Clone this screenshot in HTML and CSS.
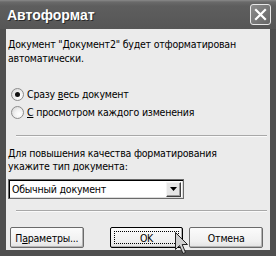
FILE: index.html
```html
<!DOCTYPE html>
<html>
<head>
<meta charset="utf-8">
<link rel="stylesheet" href="styles.css">
</head>
<body>
<div class="window">
  <div class="titlebar">
    <span class="title">Автоформат</span>
    <span class="close">
      <svg width="21" height="21" viewBox="0 0 21 21"><path d="M6 6 L15 15 M15 6 L6 15" stroke="#fff" stroke-width="2.2" stroke-linecap="square"/></svg>
    </span>
  </div>
  <div class="client">
    <p class="intro">Документ "Документ2" будет отформатирован<br>автоматически.</p>
    <div class="radios">
      <div class="radio-row"><span class="radio checked"></span><span>Сразу <u>в</u>есь документ</span></div>
      <div class="radio-row"><span class="radio"></span><span><u>С</u> просмотром каждого изменения</span></div>
    </div>
    <div class="sep"></div>
    <p class="label"><u>Д</u>ля повышения качества форматирования<br>укажите тип документа:</p>
    <div class="select">
      <span class="select-text">Обычный документ</span>
      <span class="select-btn"><svg width="7" height="4" viewBox="0 0 7 4"><path d="M0 0 H7 L3.5 4 Z" fill="#000"/></svg></span>
    </div>
    <div class="sep sep2"></div>
    <div class="buttons">
      <span class="btn">П<u>а</u>раметры...</span>
      <span class="btn default"><span class="focus">OK</span></span>
      <span class="btn">Отмена</span>
    </div>
    <svg class="cursor" width="14" height="23" viewBox="0 0 14 23"><path d="M0.5 0.5 L0.5 17.5 L4.5 13.5 L8 21.5 L10.5 20.5 L7.2 12.5 L12.5 12.5 Z" fill="#cfcfcf" stroke="#222" stroke-width="1"/></svg>
  </div>
</div>
</body>
</html>
```
FILE: styles.css
```css
html, body {
  margin: 0;
  padding: 0;
}
body {
  width: 276px;
  height: 256px;
  overflow: hidden;
  font-family: "DejaVu Sans Condensed", "DejaVu Sans", sans-serif;
  font-size: 10.5px;
  letter-spacing: -0.2px;
  white-space: nowrap;
  color: #000;
}
.window {
  width: 276px;
  height: 256px;
  background: #4f4f4f;
  display: flex;
  flex-direction: column;
}
.titlebar {
  height: 29px;
  flex: none;
  display: flex;
  align-items: center;
  justify-content: space-between;
  padding: 0 5px 0 7px;
  background: linear-gradient(#8a8a8a 0, #6a6a6a 2px, #5e5e5e 6px, #565656 100%);
}
.title {
  font-family: "Liberation Sans", Arial, sans-serif;
  font-weight: bold;
  font-size: 14px;
  letter-spacing: 0;
  color: #fff;
  text-shadow: 1px 1px 0 #2a2a2a;
  margin-top: 1px;
}
.close {
  width: 21px;
  height: 21px;
  box-sizing: border-box;
  border: 1px solid #e8e8e8;
  border-radius: 3px;
  background: linear-gradient(135deg, #8c8c8c, #666);
  display: flex;
}
.close svg {
  margin: -1px;
}
.client {
  position: relative;
  margin: 0 6px 6px 6px;
  height: 221px;
  background: #ebebeb;
  padding-left: 2px;
  display: flex;
  flex-direction: column;
}
.intro {
  margin: 8px 0 0 0;
  line-height: 14px;
}
.radios {
  margin-top: 20px;
  display: flex;
  flex-direction: column;
  padding-left: 3px;
}
.radio-row {
  height: 18px;
  line-height: 18px;
  display: flex;
  align-items: center;
  gap: 3px;
}
.radio {
  width: 13px;
  height: 13px;
  box-sizing: border-box;
  border-radius: 50%;
  border: 1px solid #8c8c8c;
  background: radial-gradient(circle at 65% 65%, #ffffff 0, #f2f2f2 40%, #d0d0d0 100%);
  display: flex;
  align-items: center;
  justify-content: center;
}
.radio.checked::after {
  content: "";
  width: 5px;
  height: 5px;
  border-radius: 50%;
  background: #111;
}
.sep {
  margin: 14px 3px 0 8px;
  height: 1px;
  background: #a8a8a8;
  box-shadow: 0 1px 0 #fafafa;
}
.label {
  margin: 11px 0 0 0;
  line-height: 13px;
}
.select {
  margin-top: 6px;
  width: 176px;
  height: 20px;
  box-sizing: border-box;
  border: 1px solid #6a6a6a;
  box-shadow: inset 1px 1px 0 #000, inset -1px -1px 0 #dcdcdc;
  background: #fff;
  display: flex;
  align-items: center;
  justify-content: space-between;
  padding: 0 2px 0 3px;
}
.select-btn {
  width: 15px;
  height: 15px;
  box-sizing: border-box;
  background: #e6e6e6;
  border: 1px solid;
  border-color: #f4f4f4 #404040 #404040 #f4f4f4;
  box-shadow: inset -1px -1px 0 #9a9a9a;
  display: flex;
  align-items: center;
  justify-content: center;
}
.sep2 {
  margin-top: 11px;
}
.buttons {
  margin-top: 16px;
  display: flex;
  padding-left: 2px;
}
.btn {
  width: 75px;
  height: 21px;
  box-sizing: border-box;
  border: 1px solid #6a6a6a;
  border-radius: 2px;
  background: linear-gradient(#fbfbfb, #f0f0f0 70%, #e2e2e2);
  box-shadow: inset -1px -1px 0 #b4b4b4;
  display: flex;
  align-items: center;
  justify-content: center;
  margin-right: 7px;
}
.btn:nth-child(2) {
  margin-left: 19px;
  margin-right: 6px;
}
.btn.default {
  border-color: #000;
  padding: 3px;
}
.focus {
  flex: 1;
  align-self: stretch;
  border: 1px dotted #000;
  display: flex;
  align-items: center;
  justify-content: center;
}
.cursor {
  position: absolute;
  left: 169px;
  top: 203px;
}
```
